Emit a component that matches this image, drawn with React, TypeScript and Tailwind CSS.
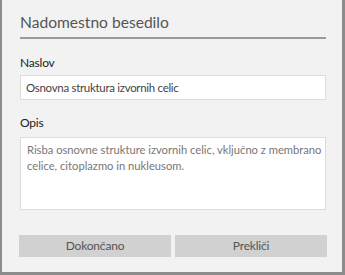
export default function App() {
  return (
    <div
      className="w-[345px] h-[275px] bg-[#f2f2f2] border-l-2 border-r-[3px] border-b-[3px] border-[#8c8c8c] box-border flex flex-col pl-[18px] pr-[16px]"
      style={{ fontFamily: 'Lato, "Open Sans", sans-serif' }}
    >
      <div className="pt-[12px] pb-[5px] border-b-2 border-[#9a9a9a] text-[15.6px] leading-[20px] text-[#555]">
        Nadomestno besedilo
      </div>
      <div className="mt-[15px] text-[12px] leading-[18px] text-[#222] tracking-[-0.2px]">Naslov</div>
      <div className="mt-[3px] h-[25px] bg-white border border-[#dcdcdc] flex items-center px-[5px] text-[11.5px] text-[#444] tracking-[-0.3px]">
        Osnovna struktura izvornih celic
      </div>
      <div className="mt-[14px] text-[12px] leading-[18px] text-[#222] tracking-[-0.2px]">Opis</div>
      <div className="mt-[5px] h-[73px] bg-white border border-[#dcdcdc] px-[6px] pt-[4px] text-[11.2px] leading-[16px] text-[#777] whitespace-nowrap">
        Risba osnovne strukture izvornih celic, vključno z membrano
        <br />
        celice, citoplazmo in nukleusom.
      </div>
      <div className="mt-[25px] flex gap-[4px] -ml-[1px] -mr-[1px]">
        <button className="flex-1 h-[22px] bg-[#d1d1d1] text-[12px] text-[#555] tracking-[-0.2px]">Dokončano</button>
        <button className="flex-1 h-[22px] bg-[#d1d1d1] text-[12px] text-[#555] tracking-[-0.2px]">Prekliči</button>
      </div>
    </div>
  );
}
